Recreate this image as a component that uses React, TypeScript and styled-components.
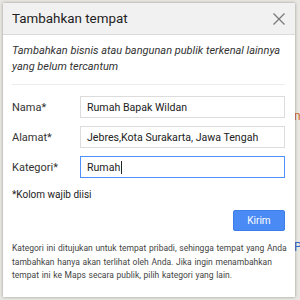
import styled, { createGlobalStyle } from "styled-components";

const Global = createGlobalStyle`
  html, body {
    margin: 0;
    padding: 0;
    background: #e9e7e2;
    font-family: Roboto, "Liberation Sans", Arial, sans-serif;
  }
`;

const Page = styled.div`
  position: relative;
  width: 300px;
  height: 300px;
  overflow: hidden;
  padding: 3px 0 0 3px;
  box-sizing: border-box;
`;

const MapLabel = styled.span<{ $color: string }>`
  position: absolute;
  font-size: 12px;
  color: ${(p) => p.$color};
`;

const Dialog = styled.div`
  position: relative;
  width: 292px;
  height: 294px;
  background: #fff;
  box-shadow: 0 0 3px rgba(0, 0, 0, 0.35);
  display: flex;
  flex-direction: column;
`;

const Header = styled.div`
  height: 31px;
  background: #f1f1f1;
  border-bottom: 1px solid #dadada;
  display: flex;
  align-items: center;
  justify-content: space-between;
  padding: 0 9px 0 9px;
`;

const Title = styled.div`
  font-size: 13.4px;
  color: #222;
`;

const Close = styled.div`
  width: 14px;
  height: 14px;
  display: flex;
`;

const Body = styled.div`
  padding: 0 10px 0 9px;
  display: flex;
  flex-direction: column;
`;

const Intro = styled.div`
  font-size: 11px;
  font-style: italic;
  color: #333;
  line-height: 16px;
  padding: 8px 0 9px;
  border-bottom: 1px solid #ececec;
`;

const Form = styled.div`
  display: flex;
  flex-direction: column;
  gap: 8px;
  padding-top: 11px;
`;

const Row = styled.div`
  display: flex;
  align-items: center;
`;

const Label = styled.div`
  width: 68px;
  font-size: 11px;
  color: #333;
`;

const Field = styled.div<{ $focused?: boolean }>`
  flex: 1;
  height: 20px;
  border: 1px solid ${(p) => (p.$focused ? "#4d90fe" : "#dcdcdc")};
  display: flex;
  align-items: center;
  padding-left: 6px;
  font-size: 10.6px;
  color: #222;
`;

const Caret = styled.span`
  display: inline-block;
  width: 1px;
  height: 13px;
  background: #222;
  margin-left: 1px;
`;

const Required = styled.div`
  font-size: 10px;
  color: #222;
  margin-top: 11px;
`;

const Actions = styled.div`
  display: flex;
  justify-content: flex-end;
  margin-top: 10px;
`;

const Button = styled.button`
  width: 52px;
  height: 21px;
  border: 1px solid #3c7ee8;
  border-radius: 2px;
  background: #4a8af4;
  color: #fff;
  font-family: inherit;
  font-size: 10px;
  padding: 0;
`;

const Note = styled.div`
  font-size: 8.5px;
  word-spacing: 0.6px;
  white-space: nowrap;
  color: #444;
  line-height: 13.5px;
  margin-top: 11px;
`;

export default function App() {
  return (
    <Page>
      <Global />
      <MapLabel $color="#d2691e" style={{ left: 294, top: 109 }}>ng</MapLabel>
      <MapLabel $color="#3366cc" style={{ left: 294, top: 240 }}>P</MapLabel>
      <Dialog>
        <Header>
          <Title>Tambahkan tempat</Title>
          <Close>
            <svg width="14" height="14" viewBox="0 0 14 14">
              <path d="M1.5 1.5 L12.5 12.5 M12.5 1.5 L1.5 12.5" stroke="#777" strokeWidth="1.2" />
            </svg>
          </Close>
        </Header>
        <Body>
          <Intro>
            Tambahkan bisnis atau bangunan publik terkenal lainnya yang belum tercantum
          </Intro>
          <Form>
            <Row>
              <Label>Nama*</Label>
              <Field>Rumah Bapak Wildan</Field>
            </Row>
            <Row>
              <Label>Alamat*</Label>
              <Field>Jebres,Kota Surakarta, Jawa Tengah</Field>
            </Row>
            <Row>
              <Label>Kategori*</Label>
              <Field $focused>
                Rumah<Caret />
              </Field>
            </Row>
          </Form>
          <Required>*Kolom wajib diisi</Required>
          <Actions>
            <Button>Kirim</Button>
          </Actions>
          <Note>
            Kategori ini ditujukan untuk tempat pribadi, sehingga tempat yang Anda
            <br />
            tambahkan hanya akan terlihat oleh Anda. Jika ingin menambahkan
            <br />
            tempat ini ke Maps secara publik, pilih kategori yang lain.
          </Note>
        </Body>
      </Dialog>
    </Page>
  );
}
